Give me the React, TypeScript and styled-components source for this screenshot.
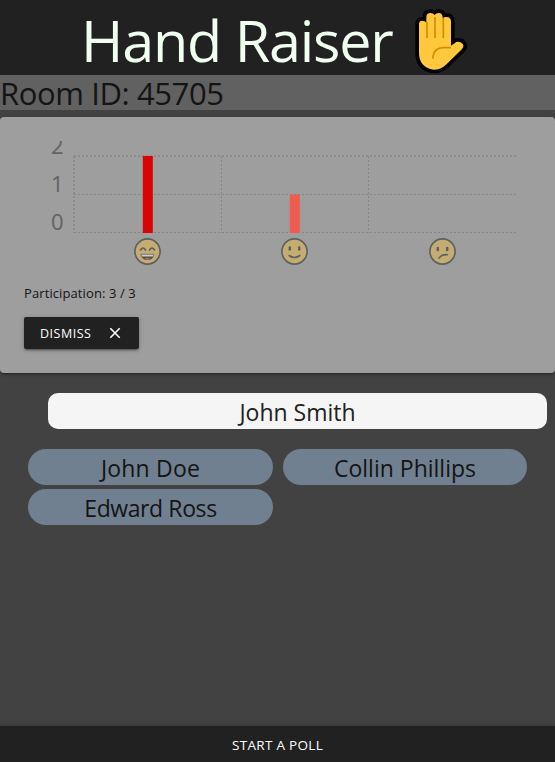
import React from "react";
import styled, { createGlobalStyle } from "styled-components";

const GlobalStyle = createGlobalStyle`
  * { box-sizing: border-box; }
  body {
    margin: 0;
    background: #424242;
    color: #141414;
    font-family: "Open Sans", "Noto Sans", sans-serif;
  }
`;

const Page = styled.div`
  height: 762px;
  display: flex;
  flex-direction: column;
  overflow: hidden;
`;

const Header = styled.header`
  height: 75px;
  flex: none;
  display: flex;
  align-items: flex-start;
  padding-left: 81px;
  background: #212121;
`;

const Title = styled.h1`
  margin: 0;
  padding-top: 5px;
  width: 334px;
  font-size: 57.5px;
  font-weight: 400;
  line-height: 70px;
  letter-spacing: -1.2px;
  white-space: nowrap;
  color: #f0fff0;
`;

const HandIcon = styled.svg`
  width: 53px;
  height: 66px;
  margin-top: 8px;
  flex: none;
`;

const RoomBar = styled.div`
  height: 35px;
  flex: none;
  background: #616161;
  font-size: 31px;
  line-height: 37px;
  letter-spacing: -0.4px;
  white-space: nowrap;
`;

const Card = styled.section`
  height: 256px;
  flex: none;
  margin-top: 7px;
  padding: 24px;
  border-radius: 4px;
  background: #9e9e9e;
  box-shadow: 0 3px 1px -2px #0003, 0 2px 2px #0002, 0 1px 5px #0002;
`;

const Chart = styled.svg`
  display: block;
  width: 507px;
  height: 130px;
  font-size: 22px;
`;

const Participation = styled.p`
  margin: 12px 0 14px;
  font-size: 13px;
  line-height: 20px;
  letter-spacing: 0.1px;
  white-space: nowrap;
`;

const DismissButton = styled.button`
  width: 115px;
  height: 32px;
  display: flex;
  align-items: center;
  padding: 0 18px 0 16px;
  justify-content: space-between;
  border: 0;
  border-radius: 2px;
  background: #212121;
  box-shadow: 0 3px 1px -2px #0003, 0 2px 2px #0002, 0 1px 5px #0003;
  color: #fff;
  font: 400 12.5px/32px "Open Sans", "Noto Sans", sans-serif;
  letter-spacing: 0.5px;
  white-space: nowrap;
`;

const ButtonLabel = styled.span`
  padding-top: 2px;
  line-height: 30px;
`;

const CloseIcon = styled.svg`
  width: 12px;
  height: 12px;
`;

const NamePill = styled.div<{ $current?: boolean; $spacing?: number }>`
  height: 36px;
  border-radius: ${(p) => (p.$current ? 10 : 18)}px;
  background: ${(p) => (p.$current ? "#f5f5f5" : "#708090")};
  color: ${(p) => (p.$current ? "#212121" : "#141414")};
  font-size: 23px;
  line-height: 39px;
  letter-spacing: ${(p) => p.$spacing ?? 0}px;
  text-align: center;
  white-space: nowrap;
`;

const CurrentUser = styled.div`
  margin: 20px 8px 0 48px;
`;

const People = styled.div`
  display: grid;
  grid-template-columns: 245px 244px;
  gap: 4px 10px;
  margin: 20px 28px 0;
`;

const PollButton = styled.button`
  height: 36px;
  flex: none;
  margin-top: auto;
  border: 0;
  background: #212121;
  box-shadow: 0 -1px 3px #0003;
  color: #fff;
  font: 400 13.5px/36px "Open Sans", "Noto Sans", sans-serif;
  letter-spacing: 0.3px;
`;

type Mood = "grin" | "smile" | "confused";

const faces: Record<Mood, React.ReactNode> = {
  grin: (
    <>
      <path d="M-7-1.5q2.5-4 5 0M2-1.5q2.5-4 5 0" />
      <path d="M-6.5 2.6h13q-.6 6-6.5 6t-6.5-6Z" fill="#4e5356" stroke="none" />
      <path d="M-6.4 2.7H6.4l-.7 2.6H-5.7Z" fill="#ccc" stroke="#5d5f60" strokeWidth=".6" />
      <path d="M-3 7.5q3-2.6 6 0q-3 1.5-6 0Z" fill="#bd6a5c" stroke="none" />
    </>
  ),
  smile: (
    <>
      <path d="M-4.7-4v2M4.7-4v2" strokeWidth="2.5" />
      <path d="M-5.4 4q5.4 4 10.8 0" />
    </>
  ),
  confused: (
    <>
      <path d="M-4.7-3.4v2M4.7-3.4v2" strokeWidth="2.5" />
      <path d="M-3.5 6.7Q-1 2.7 5 3.2" />
    </>
  ),
};

const moods: { mood: Mood; x: number; votes: number; color: string }[] = [
  { mood: "grin", x: 123.5, votes: 2, color: "#d90404" },
  { mood: "smile", x: 270.5, votes: 1, color: "#f05b4f" },
  { mood: "confused", x: 418.5, votes: 0, color: "#f4c63d" },
];

function PollChart() {
  return (
    <Chart viewBox="0 0 507 130">
      <g stroke="#858585" strokeDasharray="2 2">
        <path d="M50 15H492" strokeWidth="1.5" />
        <path d="M50 53.5H492M50 91.5H492M197.5 15V92M344.5 15V92" />
        <path d="M50 15V92" strokeWidth="1.5" />
      </g>
      <g fill="#626262" textAnchor="end">
        <text x="39.5" y="12.7">2</text>
        <text x="39.5" y="50.7">1</text>
        <text x="39.5" y="88.7">0</text>
      </g>
      {moods.map(({ mood, x, votes, color }) => (
        <g key={mood}>
          {votes > 0 && (
            <path d={`M${x + 0.3} 92V${92 - votes * 38.5}`} stroke={color} strokeWidth="10" />
          )}
          <g
            transform={`translate(${x} 110.5)`}
            fill="none"
            stroke="#5d5f60"
            strokeWidth="1.6"
            strokeLinecap="round"
          >
            <circle r="12.6" fill="#c4ac72" />
            {faces[mood]}
          </g>
        </g>
      ))}
    </Chart>
  );
}

function RaisedHand() {
  return (
    <HandIcon viewBox="60 24 159 198">
      <path
        d="M72 72Q72 62 82 62Q90 62 94 68V51Q94 39 106 39Q115 39 119 45Q123 39 131 39Q143 39 143 54Q147 51 154 51Q168 51 168 65V137L184 126Q198 123 204 133Q208 142 199 149L153 194Q137 209 116 209Q72 202 72 158Z"
        fill="#ffc83d"
        stroke="#000"
        strokeWidth="22"
        strokeLinejoin="round"
        paintOrder="stroke"
      />
      <path
        d="M96 67V114M120 51V114M145 54V114M114 176V169Q118 144 144 143H168"
        fill="none"
        stroke="#d68c00"
        strokeWidth="5"
      />
    </HandIcon>
  );
}

const people = [
  { name: "John Doe", spacing: 0.2 },
  { name: "Collin Phillips", spacing: 0 },
  { name: "Edward Ross", spacing: -0.4 },
];

export default function App() {
  return (
    <>
      <GlobalStyle />
      <Page>
        <Header>
          <Title>Hand Raiser</Title>
          <RaisedHand />
        </Header>
        <RoomBar>Room ID: 45705</RoomBar>
        <Card>
          <PollChart />
          <Participation>Participation: 3 / 3</Participation>
          <DismissButton>
            <ButtonLabel>DISMISS</ButtonLabel>
            <CloseIcon viewBox="0 0 12 12" fill="none" stroke="#fff" strokeWidth="1.6">
              <path d="M1.3 1.3l9.4 9.4M10.7 1.3l-9.4 9.4" />
            </CloseIcon>
          </DismissButton>
        </Card>
        <CurrentUser>
          <NamePill $current>John Smith</NamePill>
        </CurrentUser>
        <People>
          {people.map(({ name, spacing }) => (
            <NamePill key={name} $spacing={spacing}>
              {name}
            </NamePill>
          ))}
        </People>
        <PollButton>START A POLL</PollButton>
      </Page>
    </>
  );
}
